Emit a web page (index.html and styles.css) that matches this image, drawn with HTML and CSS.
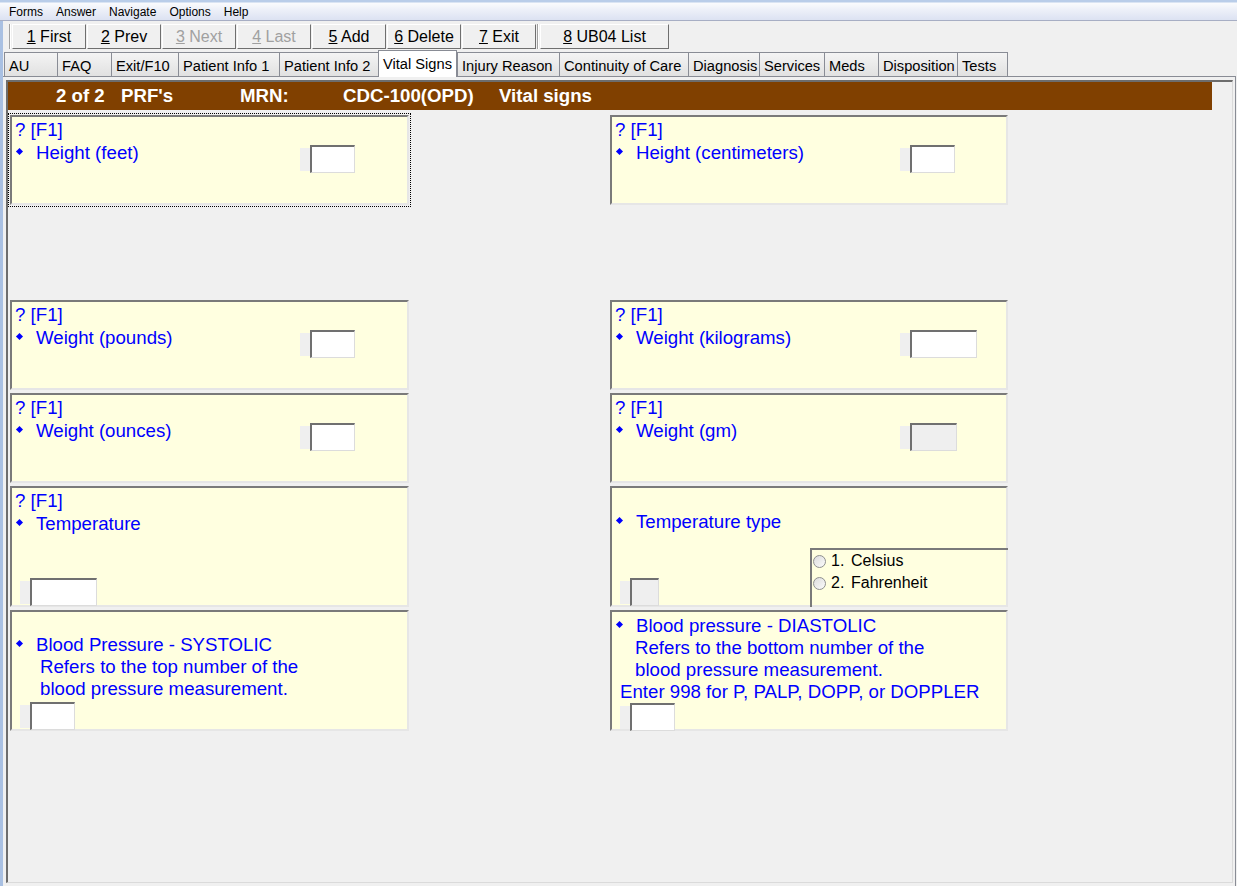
FILE: index.html
```html
<!DOCTYPE html>
<html lang="en">
<head>
    <meta charset="UTF-8">
    <title>Vital Signs - PRF</title>
    <link rel="stylesheet" href="styles.css">
</head>
<body>
    <div class="menubar">
        <span>Forms</span>
        <span>Answer</span>
        <span>Navigate</span>
        <span>Options</span>
        <span>Help</span>
    </div>
    <div class="main">
        <div class="toolbar">
            <span class="grip"></span>
            <button class="btn"><u>1</u> First</button>
            <button class="btn"><u>2</u> Prev</button>
            <button class="btn" disabled><u>3</u> Next</button>
            <button class="btn" disabled><u>4</u> Last</button>
            <button class="btn"><u>5</u> Add</button>
            <button class="btn"><u>6</u> Delete</button>
            <button class="btn"><u>7</u> Exit</button>
            <span class="grip"></span>
            <button class="btn wide"><u>8</u> UB04 List</button>
        </div>
        <div class="tabs">
            <div class="tab">AU</div>
            <div class="tab">FAQ</div>
            <div class="tab">Exit/F10</div>
            <div class="tab">Patient Info 1</div>
            <div class="tab">Patient Info 2</div>
            <div class="tab active">Vital Signs</div>
            <div class="tab">Injury Reason</div>
            <div class="tab">Continuity of Care</div>
            <div class="tab">Diagnosis</div>
            <div class="tab">Services</div>
            <div class="tab">Meds</div>
            <div class="tab">Disposition</div>
            <div class="tab">Tests</div>
        </div>
        <div class="tabpage">
            <div class="panel">
                <div class="titlebar">
                    <span>2 of 2</span>
                    <span>PRF's</span>
                    <span>MRN:</span>
                    <span>CDC-100(OPD)</span>
                    <span>Vital signs</span>
                </div>
                <div class="form">
                    <!-- row 1 -->
                    <div class="card short focused first-row">
                        <div class="text">
                            <div>? [F1]</div>
                            <div class="label"><span class="dot"></span>Height (feet)</div>
                        </div>
                        <div class="field"><span class="stub"></span><span class="box"></span></div>
                    </div>
                    <div class="card short first-row">
                        <div class="text">
                            <div>? [F1]</div>
                            <div class="label"><span class="dot"></span>Height (centimeters)</div>
                        </div>
                        <div class="field"><span class="stub"></span><span class="box"></span></div>
                    </div>

                    <!-- row 2 -->
                    <div class="card short">
                        <div class="text">
                            <div>? [F1]</div>
                            <div class="label"><span class="dot"></span>Weight (pounds)</div>
                        </div>
                        <div class="field"><span class="stub"></span><span class="box"></span></div>
                    </div>
                    <div class="card short">
                        <div class="text">
                            <div>? [F1]</div>
                            <div class="label"><span class="dot"></span>Weight (kilograms)</div>
                        </div>
                        <div class="field"><span class="stub"></span><span class="box w67"></span></div>
                    </div>

                    <!-- row 3 -->
                    <div class="card short">
                        <div class="text">
                            <div>? [F1]</div>
                            <div class="label"><span class="dot"></span>Weight (ounces)</div>
                        </div>
                        <div class="field"><span class="stub"></span><span class="box"></span></div>
                    </div>
                    <div class="card short">
                        <div class="text">
                            <div>? [F1]</div>
                            <div class="label"><span class="dot"></span>Weight (gm)</div>
                        </div>
                        <div class="field"><span class="stub"></span><span class="box w47 off"></span></div>
                    </div>

                    <!-- row 4 -->
                    <div class="card tall">
                        <div>? [F1]</div>
                        <div class="label"><span class="dot"></span>Temperature</div>
                        <div class="field bottom"><span class="stub"></span><span class="box w67"></span></div>
                    </div>
                    <div class="card tall">
                        <div class="label type-label"><span class="dot"></span>Temperature type</div>
                        <div class="bottom-row">
                            <div class="field"><span class="stub"></span><span class="box w29 off"></span></div>
                            <div class="listbox">
                                <div class="opt"><span class="radio"></span><span class="num">1.</span>Celsius</div>
                                <div class="opt"><span class="radio"></span><span class="num">2.</span>Fahrenheit</div>
                            </div>
                        </div>
                    </div>

                    <!-- row 5 -->
                    <div class="card tall">
                        <div class="desc sys">
                            <div class="label"><span class="dot"></span>Blood Pressure - SYSTOLIC</div>
                            <div class="in25">Refers to the top number of the</div>
                            <div class="in25">blood pressure measurement.</div>
                        </div>
                        <div class="field bottom"><span class="stub"></span><span class="box"></span></div>
                    </div>
                    <div class="card tall">
                        <div class="desc dia">
                            <div class="label"><span class="dot"></span>Blood pressure - DIASTOLIC</div>
                            <div class="in20">Refers to the bottom number of the</div>
                            <div class="in20">blood pressure measurement.</div>
                            <div class="in5">Enter 998 for P, PALP, DOPP, or DOPPLER</div>
                        </div>
                        <div class="field bottom"><span class="stub"></span><span class="box"></span></div>
                    </div>
                </div>
            </div>
        </div>
    </div>
</body>
</html>
```

FILE: styles.css
```css
* {
    box-sizing: border-box;
}
body {
    margin: 0;
    width: 1237px;
    height: 886px;
    overflow: hidden;
    background: #f0f0f0;
    font-family: "Liberation Sans", Arial, sans-serif;
    display: flex;
    flex-direction: column;
}

/* menu bar */
.menubar {
    height: 21px;
    padding: 4px 0 0 9px;
    display: flex;
    gap: 13px;
    font-size: 12px;
    line-height: 16px;
    color: #000;
    background: linear-gradient(to bottom, #b9cde9 0, #b9cde9 2px, #fafbfd 3px, #eef1f9 9px, #dce2f2 20px);
    border-bottom: 1px solid #a7aec4;
}

.main {
    flex: 1;
    min-height: 0;
    display: flex;
    flex-direction: column;
    border-left: 3px solid #a9c0e2;
    margin-right: 1px;
}

/* toolbar */
.toolbar {
    height: 29px;
    padding: 3px 0 0 6px;
    display: flex;
    gap: 1px;
    align-items: flex-start;
}
.grip {
    width: 2px;
    height: 25px;
    border-left: 1px solid #a0a0a0;
    border-right: 1px solid #fff;
}
.btn {
    width: 74px;
    height: 25px;
    padding: 0;
    font: 16px "Liberation Sans", Arial, sans-serif;
    color: #000;
    background: #f0f0f0;
    border: 1px solid;
    border-color: #fff #6f6f6f #6f6f6f #fff;
}
.btn.wide {
    width: 129px;
}
.btn:disabled {
    color: #a0a0a0;
}

/* tabs */
.tabs {
    height: 26px;
    padding-left: 1px;
    display: grid;
    grid-template-columns: 53px 54px 67px 101px 99px 79px 102px 129px 71px 65px 54px 79px 51px;
    align-items: end;
    font-size: 14.67px;
}
.tab {
    height: 24px;
    padding: 4px 0 0 4px;
    line-height: 18px;
    border-top: 1px solid #898c95;
    border-left: 1px solid #898c95;
    background: linear-gradient(to bottom, #f4f4f4, #e1e1e1);
    white-space: nowrap;
    overflow: hidden;
    color: #000;
}
.tab:last-child {
    border-right: 1px solid #898c95;
}
.tab.active {
    height: 27px;
    margin-bottom: -1px;
    background: #fff;
    border-right: 1px solid #898c95;
    position: relative;
    z-index: 1;
}

.tabpage {
    flex: 1;
    min-height: 0;
    display: flex;
    flex-direction: column;
    padding: 3px 2px 3px 3px;
    border-top: 1px solid #898c95;
    border-right: 1px solid #898c95;
}
.panel {
    flex: 1;
    border-style: solid;
    border-width: 2px 1px 1px 2px;
    border-color: #6d6d6d #dadada #dadada #6d6d6d;
}

.titlebar {
    width: 1204px;
    height: 28px;
    padding-left: 48px;
    display: grid;
    grid-template-columns: 65px 119px 103px 156px auto;
    align-items: center;
    background: #804000;
    color: #fff;
    font-weight: bold;
    font-size: 18.67px;
    white-space: nowrap;
}

/* question cards */
.form {
    display: grid;
    grid-template-columns: 399px 398px;
    column-gap: 201px;
    row-gap: 3px;
    padding: 5px 0 0 2px;
}
.card {
    background: #ffffe0;
    border: 2px solid;
    border-color: #7a7a7a #e6e6e6 #e6e6e6 #7a7a7a;
    padding: 1px 3px 0 3px;
    color: #0000ff;
    font-size: 18.67px;
    line-height: 23px;
    white-space: nowrap;
}
.card.short {
    height: 90px;
    display: grid;
    grid-template-columns: 285px auto;
    align-items: start;
}
.card.tall {
    height: 121px;
    display: flex;
    flex-direction: column;
}
.card.first-row {
    margin-bottom: 92px;
}
.card.focused {
    outline: 1px dotted #000;
    outline-offset: 1px;
}

.dot {
    display: inline-block;
    width: 5px;
    height: 5px;
    margin: 0 14px 0 2px;
    background: #0000ff;
    transform: rotate(45deg);
    vertical-align: 5px;
}
.type-label {
    margin-top: 21px;
}
.desc {
    line-height: 22px;
}
.desc.sys {
    margin-top: 21px;
}
.desc.dia {
    margin-top: 2px;
}
.in25 {
    padding-left: 25px;
}
.in20 {
    padding-left: 20px;
}
.in5 {
    padding-left: 5px;
}

/* input boxes */
.field {
    display: flex;
    align-items: flex-start;
}
.card.short .field {
    margin-top: 27px;
}
.field.bottom {
    margin-top: auto;
    margin-bottom: -1px;
    padding-left: 5px;
}
.stub {
    width: 10px;
    height: 23px;
    margin-top: 3px;
    background: #efefef;
}
.box {
    width: 45px;
    height: 28px;
    background: #fff;
    border-top: 2px solid #707070;
    border-left: 2px solid #707070;
    border-right: 1px solid #dcdcdc;
    border-bottom: 1px solid #dcdcdc;
}
.box.w67 {
    width: 67px;
}
.box.w47 {
    width: 47px;
}
.box.w29 {
    width: 29px;
}
.box.off {
    background: #efefef;
}

.bottom-row {
    margin-top: auto;
    display: flex;
    align-items: flex-end;
}
.bottom-row .field {
    padding-left: 5px;
    margin-bottom: -1px;
}
.listbox {
    width: 198px;
    height: 59px;
    margin-left: auto;
    margin-right: -5px;
    margin-bottom: -2px;
    padding-left: 1px;
    border-top: 2px solid #7a7a7a;
    border-left: 2px solid #7a7a7a;
    color: #000;
    font-size: 16px;
    line-height: 22px;
}
.opt {
    display: flex;
    align-items: center;
}
.radio {
    width: 13px;
    height: 13px;
    margin-right: 5px;
    border: 1px solid #8e8f8f;
    border-radius: 50%;
    background: linear-gradient(135deg, #dcdcdc, #fbfbfb);
}
.num {
    display: inline-block;
    width: 20px;
}
```
